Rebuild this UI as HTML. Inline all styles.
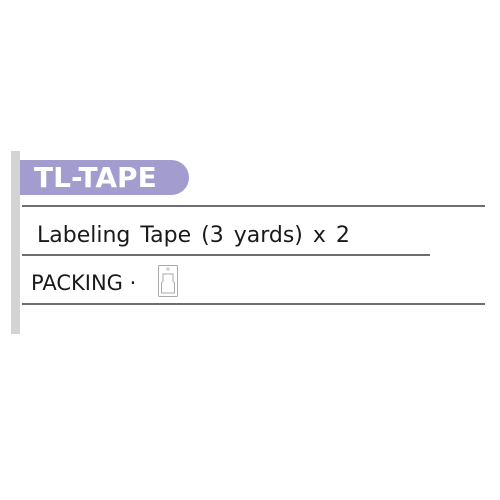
<!DOCTYPE html>
<html><head><style>
body{margin:0;width:500px;height:500px;background:#fff;position:relative;overflow:hidden;font-family:"DejaVu Sans","Liberation Sans",sans-serif}
div{position:absolute}
.l{height:2px;background:#6e6e6e}
</style></head><body>
<div style="left:11px;top:151px;width:9px;height:183px;background:#d3d3d3"></div>
<div style="left:20px;top:160px;width:169px;height:35px;background:#a29dce;border-radius:0 18px 18px 0"></div>
<div style="left:34px;top:160px;height:35px;line-height:36px;color:#fff;font-size:28px;font-weight:bold">TL-TAPE</div>
<div class="l" style="left:22px;top:205px;width:463px"></div>
<div style="left:37px;top:222px;font-size:22px;color:#1a1a1a;line-height:28px;word-spacing:3px">Labeling Tape (3 yards) x 2</div>
<div class="l" style="left:22px;top:254px;width:408px"></div>
<div style="left:31px;top:269px;font-size:21px;color:#1a1a1a;line-height:28px">PACKING ·</div>
<svg style="position:absolute;left:157px;top:264px" width="22" height="34"><rect x="1.5" y="1.5" width="19" height="31" rx="1" fill="none" stroke="#aaa"/><circle cx="11" cy="5" r="1.2" fill="none" stroke="#aaa" stroke-width=".7"/><path d="M6 10h10v7l1.5 2v10H4.5V19L6 17z" fill="none" stroke="#aaa"/></svg>
<div class="l" style="left:22px;top:303px;width:463px"></div>
</body></html>
